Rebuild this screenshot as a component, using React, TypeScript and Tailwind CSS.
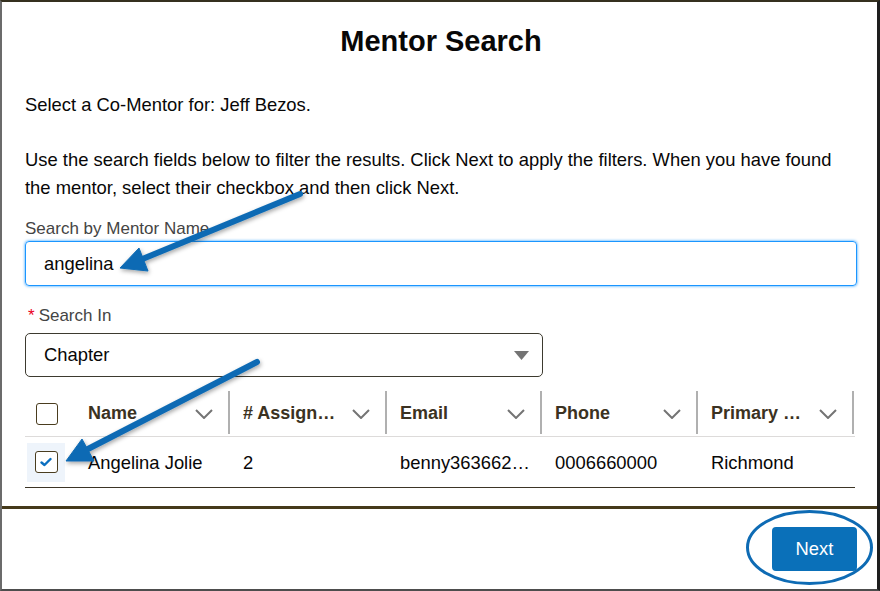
import React from "react";

const Chevron = () => (
  <svg width="18" height="10" viewBox="0 0 18 10" className="shrink-0">
    <path d="M1 1 L9 9 L17 1" fill="none" stroke="#747474" strokeWidth="2" />
  </svg>
);

const cols = [
  { label: "Name", w: "w-[155px]" },
  { label: "# Assign…", w: "w-[157px]" },
  { label: "Email", w: "w-[155px]" },
  { label: "Phone", w: "w-[156px]" },
  { label: "Primary …", w: "w-[156px]" },
];

const cells = ["Angelina Jolie", "2", "benny363662…", "0006660000", "Richmond"];

export default function App() {
  return (
    <div className="relative w-[880px] h-[591px] overflow-hidden bg-white border-t-2 border-l-2 border-r-[3px] border-b-2 border-t-[#35301f] border-l-[#6b6b6b] border-r-[#1e1e1e] border-b-[#4d4d4d] font-['Liberation_Sans',Arial,sans-serif] text-[#080707]">
      <div className="pl-[23px] pr-[20px]">
        <h1 className="pt-[22px] text-center text-[29px] font-bold leading-[34px]">Mentor Search</h1>
        <p className="mt-[33px] text-[18.4px] leading-[28px]">Select a Co-Mentor for: Jeff Bezos.</p>
        <p className="mt-[27px] text-[18.4px] leading-[28px]">
          Use the search fields below to filter the results. Click Next to apply the filters. When you have found
          <br />
          the mentor, select their checkbox and then click Next.
        </p>
        <div className="mt-[16px] text-[17px] leading-[22px] text-[#444444]">Search by Mentor Name</div>
        <div className="mt-[1px] h-[45px] rounded-[4px] border border-[#1b96ff] shadow-[0_0_3px_#1b96ff] flex items-center pl-[18px] text-[18.4px]">
          angelina
        </div>
        <div className="mt-[19px] text-[17px] leading-[22px] text-[#444444] flex items-center">
          <span className="text-[#ea001e] ml-[3px] mr-[4px] text-[17px] leading-[22px]">*</span>Search In
        </div>
        <div className="mt-[6px] w-[518px] h-[44px] rounded-[5px] border border-[#3d3a2f] flex items-center justify-between pl-[18px] pr-[13px] text-[18.4px]">
          <span>Chapter</span>
          <svg width="15" height="9" viewBox="0 0 15 9">
            <path d="M0 0 L15 0 L7.5 9 Z" fill="#747474" />
          </svg>
        </div>

        <div className="mt-[14px] w-[830px]">
          <div className="flex h-[46px] border-b border-[#dddbda]">
            <div className="w-[50px] flex items-center pl-[11px]">
              <div className="w-[22px] h-[22px] rounded-[3px] border border-[#4a3d1f] bg-white" />
            </div>
            {cols.map((c) => (
              <div key={c.label} className={`${c.w} flex items-stretch`}>
                <div className="flex-1 flex items-center justify-between pl-[13px] pr-[15px]">
                  <span className="text-[18px] font-bold text-[#3b3222] whitespace-nowrap">{c.label}</span>
                  <Chevron />
                </div>
                <div className="w-[2px] h-[43px] bg-[#b0b0b0]" />
              </div>
            ))}
          </div>
          <div className="flex h-[51px] border-b border-[#3d3526] items-center">
            <div className="w-[50px] h-full flex items-center pl-[2px]">
              <div className="w-[38px] h-[39px] bg-[#eef4fb] flex items-center justify-center">
                <div className="w-[23px] h-[22px] rounded-[3px] border border-[#4a3d1f] bg-white flex items-center justify-center">
                  <svg width="12" height="10" viewBox="0 0 12 10">
                    <path d="M1.5 5.5 L4.5 8 L10.5 2" fill="none" stroke="#0b6fc0" strokeWidth="2.4" strokeLinecap="round" strokeLinejoin="round" />
                  </svg>
                </div>
              </div>
            </div>
            {cells.map((v, i) => (
              <div key={i} className={`${cols[i].w} pl-[13px] pt-[2px] text-[18.4px] whitespace-nowrap`}>{v}</div>
            ))}
          </div>
        </div>
      </div>

      <div className="mt-[18px] h-[3px] bg-[#45391a]" />

      <div className="flex justify-end pr-[20px] mt-[18px]">
        <button className="w-[85px] h-[44px] rounded-[4px] bg-[#0a70b9] text-white text-[18.4px]">Next</button>
      </div>

      <svg className="absolute left-[-2px] top-[-2px] pointer-events-none" width="880" height="591" viewBox="0 0 880 591">
        <defs>
          <filter id="sh" x="-20%" y="-20%" width="140%" height="140%">
            <feDropShadow dx="1" dy="2" stdDeviation="2" floodColor="#000" floodOpacity="0.35" />
          </filter>
        </defs>
        <g filter="url(#sh)" fill="#0e6bb4" stroke="#0e6bb4">
          <line x1="300" y1="194" x2="140" y2="260" strokeWidth="6" strokeLinecap="round" />
          <path d="M120 268 L139 248 L148 271 Z" strokeWidth="1" strokeLinejoin="round" />
          <line x1="257" y1="362" x2="86" y2="450" strokeWidth="6" strokeLinecap="round" />
          <path d="M66 461 L82 439 L94 461 Z" strokeWidth="1" strokeLinejoin="round" />
        </g>
        <ellipse cx="809.5" cy="547.5" rx="62" ry="36" fill="none" stroke="#0e6bb4" strokeWidth="3" />
      </svg>
    </div>
  );
}
